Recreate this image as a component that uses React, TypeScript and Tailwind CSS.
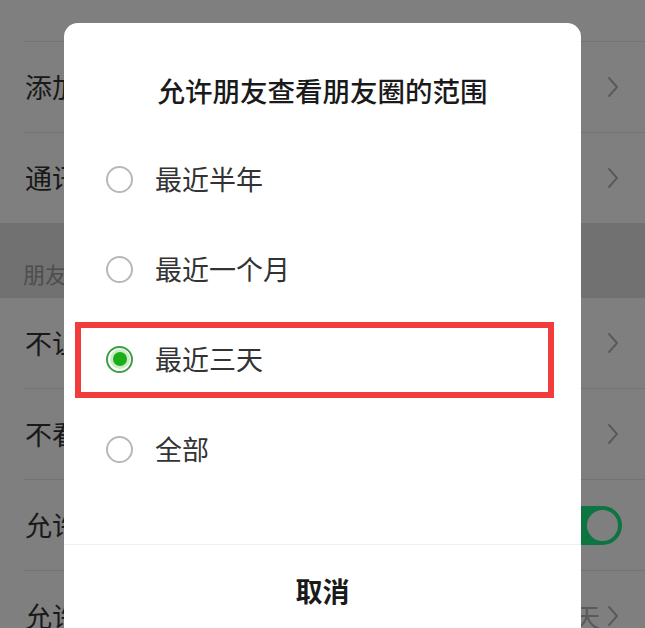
import React from "react";

const Chevron = () => (
  <svg width="14" height="24" viewBox="0 0 14 24" fill="none">
    <path d="M3 3 L11 12 L3 21" stroke="#b4b4b4" strokeWidth="2" strokeLinecap="round" strokeLinejoin="round" />
  </svg>
);

const Row = ({ label, right, line = true }: { label: string; right?: React.ReactNode; line?: boolean }) => (
  <div className="flex flex-col">
    <div className="h-[90px] flex items-center justify-between pl-[25px] pr-[25px]">
      <span className="text-[27px] leading-[30px] text-[#333333]">{label}</span>
      {right ?? <Chevron />}
    </div>
    {line && <div className="ml-[23px] h-px bg-[#e6e6e6]" />}
  </div>
);

const Radio = ({ checked }: { checked?: boolean }) =>
  checked ? (
    <div className="w-[27px] h-[27px] rounded-full border-2 border-[#3f9d48] flex items-center justify-center">
      <div className="w-[20px] h-[20px] rounded-full bg-[#c9ecc6] flex items-center justify-center">
        <div className="w-[14px] h-[14px] rounded-full bg-[#1aad19]" />
      </div>
    </div>
  ) : (
    <div className="w-[27px] h-[27px] rounded-full border-2 border-[#b8b8b8]" />
  );

export default function App() {
  const options = [
    { label: "最近半年" },
    { label: "最近一个月" },
    { label: "最近三天", checked: true },
    { label: "全部" },
  ];
  return (
    <div
      className="relative w-[645px] h-[628px] overflow-hidden bg-white"
      style={{ fontFamily: '"Noto Sans CJK SC", "Noto Sans", sans-serif' }}
    >
      {/* underlying settings page */}
      <div className="flex flex-col">
        <div className="h-[41px]" />
        <div className="ml-[23px] h-px bg-[#e6e6e6]" />
        <Row label="添加我的方式" />
        <Row label="通讯录黑名单" line={false} />
        <div className="h-[75px] bg-[#e2e2e2] flex items-end pl-[23px] pb-[12px]">
          <span className="text-[22px] leading-[26px] text-[#9a9a9a]">朋友圈</span>
        </div>
        <Row label="不让他（她）看" />
        <Row label="不看他（她）" />
        <Row
          label="允许陌生人查看十条朋友圈"
          right={
            <div className="w-[64px] h-[39px] rounded-full bg-[#18ea82] flex items-center justify-end pr-[1px] mr-[-2px]">
              <div className="w-[37px] h-[37px] rounded-full bg-white border-[3px] border-[#18ea82]" />
            </div>
          }
        />
        <Row
          label="允许朋友查看朋友圈的范围"
          right={
            <div className="flex items-center gap-[6px]">
              <span className="text-[26px] leading-[30px] text-[#b4b4b4]">最近三天</span>
              <Chevron />
            </div>
          }
        />
      </div>

      {/* dim overlay */}
      <div className="absolute inset-0 bg-black/50" />

      {/* dialog */}
      <div className="absolute left-[64px] top-[23px] w-[517px] h-[620px] rounded-[14px] bg-white flex flex-col">
        <div className="pt-[53px] text-center text-[27.5px] leading-[28px] font-medium text-[#1a1a1a]">
          允许朋友查看朋友圈的范围
        </div>
        <div className="mt-[30px] flex flex-col">
          {options.map((o) => (
            <div key={o.label} className="h-[90px] flex items-center pl-[42px] gap-[22px]">
              <Radio checked={o.checked} />
              <span className="text-[27px] leading-[30px] text-[#333333]">{o.label}</span>
            </div>
          ))}
        </div>
        <div className="mt-[50px] border-t border-[#f0f0f0] h-[92px] flex items-center justify-center">
          <span className="text-[27px] leading-[30px] font-bold text-[#1a1a1a]">取消</span>
        </div>
      </div>

      {/* annotation box */}
      <div className="absolute left-[75px] top-[322px] w-[479px] h-[76px] border-[6px] border-[#f23b3b]" />
    </div>
  );
}
